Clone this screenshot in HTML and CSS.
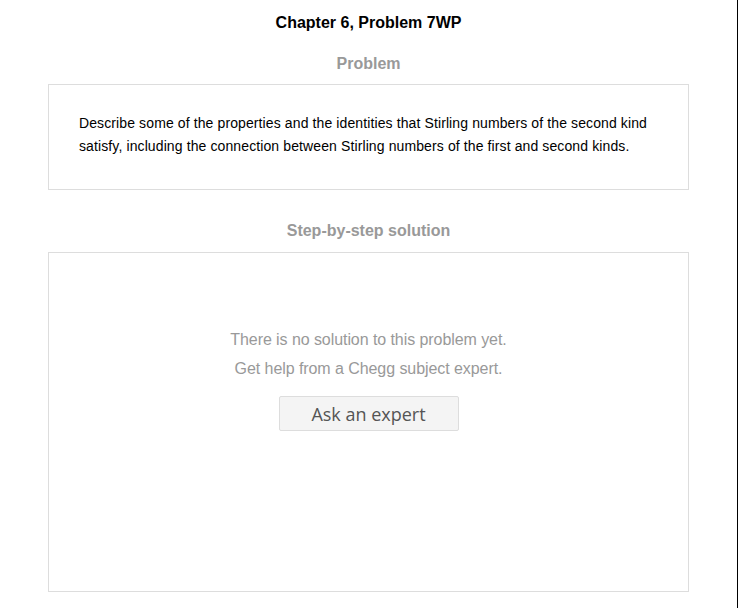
FILE: index.html
```html
<!DOCTYPE html>
<html>
<head>
<meta charset="utf-8">
<link rel="stylesheet" href="styles.css">
</head>
<body>
<div class="page">
  <h1 class="title">Chapter 6, Problem 7WP</h1>
  <h2 class="section-title">Problem</h2>
  <div class="box problem-box">
    <p class="problem-text">Describe some of the properties and the identities that Stirling numbers of the second kind satisfy, including the connection between Stirling numbers of the first and second kinds.</p>
  </div>
  <h2 class="section-title solution-title">Step-by-step solution</h2>
  <div class="box solution-box">
    <p class="empty-text">There is no solution to this problem yet.</p>
    <p class="empty-text">Get help from a Chegg subject expert.</p>
    <button class="ask-btn">Ask an expert</button>
  </div>
</div>
</body>
</html>
```

FILE: styles.css
```css
html, body {
  margin: 0;
  padding: 0;
  background: #fff;
}
body {
  font-family: "Liberation Sans", Arial, sans-serif;
}
.page {
  width: 737px;
  height: 608px;
  border-right: 1px solid #000;
  box-sizing: content-box;
  display: flex;
  flex-direction: column;
  align-items: center;
  overflow: hidden;
}
.title {
  margin: 13px 0 0;
  font-size: 16px;
  font-weight: bold;
  color: #000;
  line-height: 19px;
}
.section-title {
  margin: 22px 0 0;
  font-size: 16px;
  font-weight: bold;
  color: #999;
  line-height: 19px;
}
.box {
  width: 641px;
  box-sizing: border-box;
  border: 1px solid #ddd;
  margin-top: 11px;
}
.problem-box {
  height: 106px;
  padding: 27px 30px 0;
}
.problem-text {
  margin: 0;
  font-size: 14px;
  line-height: 23px;
  letter-spacing: 0.11px;
  color: #000;
}
.solution-title {
  margin-top: 31px;
}
.solution-box {
  margin-top: 12px;
  height: 340px;
  display: flex;
  flex-direction: column;
  align-items: center;
  padding-top: 72px;
}
.empty-text {
  margin: 0;
  font-size: 16px;
  line-height: 29px;
  letter-spacing: -0.07px;
  color: #999;
}
.ask-btn {
  margin-top: 13px;
  width: 180px;
  height: 35px;
  background: #f4f4f4;
  border: 1px solid #ddd;
  border-radius: 2px;
  font-family: "Open Sans", sans-serif;
  font-size: 18px;
  color: #555;
  padding: 0;
}
```
